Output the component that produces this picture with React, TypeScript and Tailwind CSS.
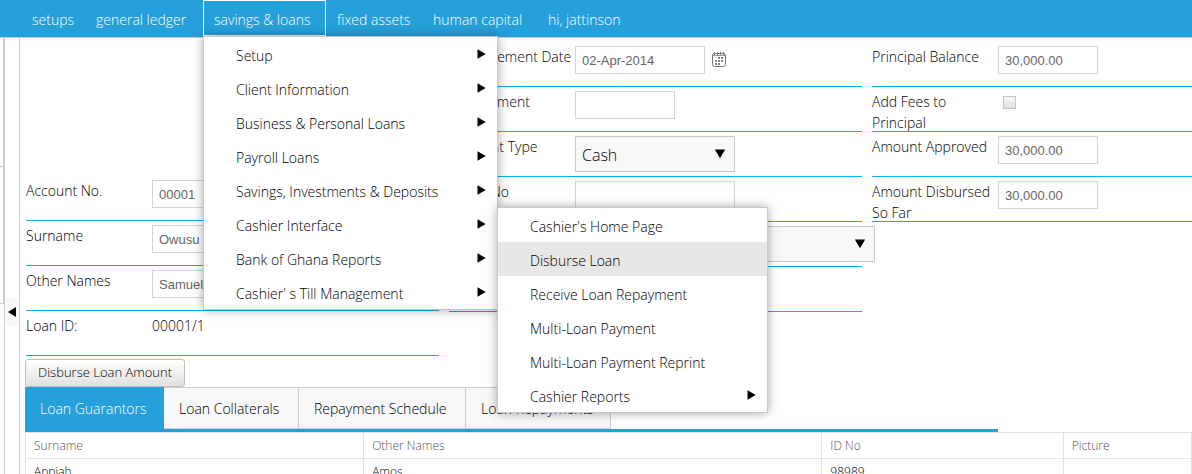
import React from "react";

const menuItems = [
  "Setup",
  "Client Information",
  "Business & Personal Loans",
  "Payroll Loans",
  "Savings, Investments & Deposits",
  "Cashier Interface",
  "Bank of Ghana Reports",
  "Cashier' s Till Management",
];

const cashierItems = [
  { label: "Cashier's Home Page" },
  { label: "Disburse Loan", active: true },
  { label: "Receive Loan Repayment" },
  { label: "Multi-Loan Payment" },
  { label: "Multi-Loan Payment Reprint" },
  { label: "Cashier Reports", more: true },
];

const panel =
  "absolute z-10 border border-[#c8c8c8] bg-white text-black shadow-[0_0_10px_rgba(0,0,0,0.35)]";
const menuLink = "flex h-[34px] items-center justify-between pl-8 pr-[11px] pt-0.5";
const box = "h-7 border border-[#d4d4d4] bg-white px-1.5 font-['Liberation_Sans',sans-serif] text-[13px] text-[#666]";

function RightArrow() {
  return (
    <svg className="mb-0.5 h-[10px] w-[9px]" viewBox="0 0 9 10" aria-hidden="true">
      <path d="M0.5 0.3 L8.7 5 L0.5 9.7 Z" fill="#000" />
    </svg>
  );
}

function CashierMenu() {
  return (
    <ul className={`${panel} left-full top-0 w-[271px]`}>
      {cashierItems.map((item) => (
        <li key={item.label}>
          <a href="#" className={`${menuLink} ${item.active ? "bg-[#e7e7e7]" : ""}`}>
            {item.label}
            {item.more && <RightArrow />}
          </a>
        </li>
      ))}
    </ul>
  );
}

function LoansMenu() {
  return (
    <ul className={`${panel} -left-px top-full mt-px w-[295px]`}>
      {menuItems.map((label) => (
        <li key={label} className="relative">
          <a href="#" className={menuLink}>
            {label}
            <RightArrow />
          </a>
          {label === "Cashier Interface" && <CashierMenu />}
        </li>
      ))}
    </ul>
  );
}

type NavItemProps = { label: string; width: string; open?: boolean; children?: React.ReactNode };

function NavItem({ label, width, open, children }: NavItemProps) {
  return (
    <li className={`relative h-9 border ${width} ${open ? "border-white" : "border-transparent"}`}>
      <a href="#" className="flex h-full items-center whitespace-nowrap px-[10px] pt-0.5 text-white">
        {label}
      </a>
      {children}
    </li>
  );
}

function Row({ label, id, children }: { label: string; id?: string; children?: React.ReactNode }) {
  return (
    <div className="flex h-[45px] items-start border-b border-[#0aaeff] pt-1">
      <label htmlFor={id} className="w-[126px] shrink-0 leading-[21px]">
        {label}
      </label>
      {children}
    </div>
  );
}

function Choice({ id, className, options }: { id: string; className: string; options: string[] }) {
  return (
    <div className={`relative shrink-0 ${className}`}>
      <select
        id={id}
        className="h-9 w-full appearance-none border border-[#c8c8c8] bg-[#f8f8f8] px-1.5 pt-0.5 text-base font-light text-black"
      >
        {options.map((o) => (
          <option key={o}>{o}</option>
        ))}
      </select>
      <svg className="pointer-events-none absolute right-[9px] top-[13px] h-[10px] w-3" viewBox="0 0 12 10" aria-hidden="true">
        <path d="M0.8 0.5 H11.2 L6 9.2 Z" fill="#000" />
      </svg>
    </div>
  );
}

function CalendarIcon() {
  return (
    <svg className="h-4 w-[14px]" viewBox="0 0 14 16" aria-hidden="true" shapeRendering="crispEdges">
      <rect x="0.5" y="1.5" width="13" height="13" rx="2" fill="#fff" stroke="#777" shapeRendering="auto" />
      <path d="M1 3.5 H13" stroke="#999" />
      <path d="M2.5 0 V3 M5.5 0 V3 M8.5 0 V3 M11.5 0 V3" stroke="#888" />
      <path
        d="M6 5h2v2h-2z M9 5h2v2h-2z M3 8h2v2h-2z M6 8h2v2h-2z M9 8h2v2h-2z M3 11h2v2h-2z M6 11h2v2h-2z"
        fill="#888"
      />
    </svg>
  );
}

const tabs = [
  { label: "Loan Guarantors", width: "min-w-[139px]" },
  { label: "Loan Collaterals", width: "min-w-[135px]" },
  { label: "Repayment Schedule", width: "min-w-[167px]" },
  { label: "Loan Repayments", width: "min-w-[145px]" },
];

export default function App() {
  return (
    <div className="flex h-screen flex-col overflow-hidden bg-white font-['Open_Sans',sans-serif] text-[14px] font-light text-black">
      <nav className="shrink-0 border-b border-[#ccc] bg-[#26a0da]">
        <ul className="flex h-[37px] pl-[21px]">
          <NavItem label="setups" width="min-w-[64px]" />
          <NavItem label="general ledger" width="min-w-[118px]" />
          <NavItem label="savings & loans" width="min-w-[123px]" open>
            <LoansMenu />
          </NavItem>
          <NavItem label="fixed assets" width="min-w-[96px]" />
          <NavItem label="human capital" width="min-w-[115px]" />
          <NavItem label="hi, jattinson" width="min-w-[94px]" />
        </ul>
      </nav>

      <div className="flex min-h-0 flex-1">
        <aside className="flex w-[5px] shrink-0 flex-col">
          <div className="h-[129px] border-b border-r-2 border-[#ccc]" />
          <div className="h-[137px] border-b border-r-2 border-[#ccc]" />
          <div className="flex-1 border-r border-[#ccc]" />
        </aside>
        <div className="w-[15px] shrink-0 border-r border-[#ccc] pt-[260px]">
          <button type="button" aria-label="Collapse" className="flex h-7 w-full items-center bg-[#f8f8f8] pl-[3px]">
            <svg className="h-[10px] w-2" viewBox="0 0 8 10" aria-hidden="true">
              <path d="M8 0 L0 5 L8 10 Z" fill="#000" />
            </svg>
          </button>
        </div>

        <main className="min-w-0 flex-1 pl-[5px] pt-1">
          <form className="grid grid-cols-[413fr_413fr_320fr] gap-x-[10px] pl-px">
            <div className="min-w-0">
              <div className="h-[134px]" />
              <Row label="Account No." id="account">
                <input id="account" className={`${box} w-[160px]`} defaultValue="00001" />
              </Row>
              <Row label="Surname" id="surname">
                <input id="surname" className={`${box} w-[160px]`} defaultValue="Owusu" />
              </Row>
              <Row label="Other Names" id="others">
                <input id="others" className={`${box} w-[160px]`} defaultValue="Samuel" />
              </Row>
              <Row label="Loan ID:">
                <span className="leading-[21px]">00001/1</span>
              </Row>
            </div>

            <div className="min-w-0">
              <Row label="Disbursement Date" id="date">
                <input id="date" className={`${box} w-[130px]`} defaultValue="02-Apr-2014" />
                <button type="button" aria-label="Choose date" className="ml-[7px] mt-1.5">
                  <CalendarIcon />
                </button>
              </Row>
              <Row label="Pre-Payment" id="prepay">
                <input id="prepay" className={`${box} w-[100px]`} />
              </Row>
              <Row label="Payment Type" id="type">
                <Choice id="type" className="w-[160px]" options={["Cash", "Cheque"]} />
              </Row>
              <Row label="Check No" id="cheque">
                <input id="cheque" className={`${box} w-[160px]`} />
              </Row>
              <Row label="Bank" id="bank">
                <Choice id="bank" className="w-[300px]" options={[""]} />
              </Row>
              <Row label="" />
            </div>

            <div className="min-w-0">
              <Row label="Principal Balance" id="balance">
                <input id="balance" className={`${box} w-[100px]`} defaultValue="30,000.00" />
              </Row>
              <Row label="Add Fees to Principal" id="fees">
                <input
                  id="fees"
                  type="checkbox"
                  className="ml-[5px] mt-[5px] h-[13px] w-[13px] appearance-none border border-[#c4c4c4] bg-linear-to-b from-[#fafafa] to-[#e0e0e0]"
                />
              </Row>
              <Row label="Amount Approved" id="approved">
                <input id="approved" className={`${box} w-[100px]`} defaultValue="30,000.00" />
              </Row>
              <Row label="Amount Disbursed So Far" id="disbursed">
                <input id="disbursed" className={`${box} w-[100px]`} defaultValue="30,000.00" />
              </Row>
            </div>
          </form>

          <button
            type="button"
            className="mt-[3px] block h-7 rounded-[3px] border border-[#c0c0c0] bg-linear-to-b from-white to-[#e0e0e0] px-3 text-[13px]"
          >
            Disburse Loan Amount
          </button>

          <div role="tablist" className="flex h-[45px] w-5/6 border-b-3 border-[#26a0da]">
            {tabs.map((tab, i) => (
              <button
                key={tab.label}
                type="button"
                role="tab"
                aria-selected={i === 0}
                className={`whitespace-nowrap px-[15px] text-left ${tab.width} ${
                  i === 0 ? "bg-[#26a0da] text-white" : "border-y border-r border-[#ccc] bg-[#f8f8f8]"
                }`}
              >
                {tab.label}
              </button>
            ))}
          </div>

          <table className="w-full table-fixed border-collapse text-left">
            <colgroup>
              <col className="w-[29%]" />
              <col className="w-[39.3%]" />
              <col className="w-[20.7%]" />
              <col />
            </colgroup>
            <thead>
              <tr className="h-[26px] text-[12px] text-[#555]">
                {["Surname", "Other Names", "ID No", "Picture"].map((h) => (
                  <th key={h} className="border border-[#e2e2e2] px-2 font-light">
                    {h}
                  </th>
                ))}
              </tr>
            </thead>
            <tbody>
              <tr className="h-[26px] text-[12px]">
                <td className="border border-[#e2e2e2] px-2">Appiah</td>
                <td className="border border-[#e2e2e2] px-2">Amos</td>
                <td className="border border-[#e2e2e2] px-2">98989</td>
                <td className="border border-[#e2e2e2] px-2" />
              </tr>
            </tbody>
          </table>
        </main>
      </div>
    </div>
  );
}
